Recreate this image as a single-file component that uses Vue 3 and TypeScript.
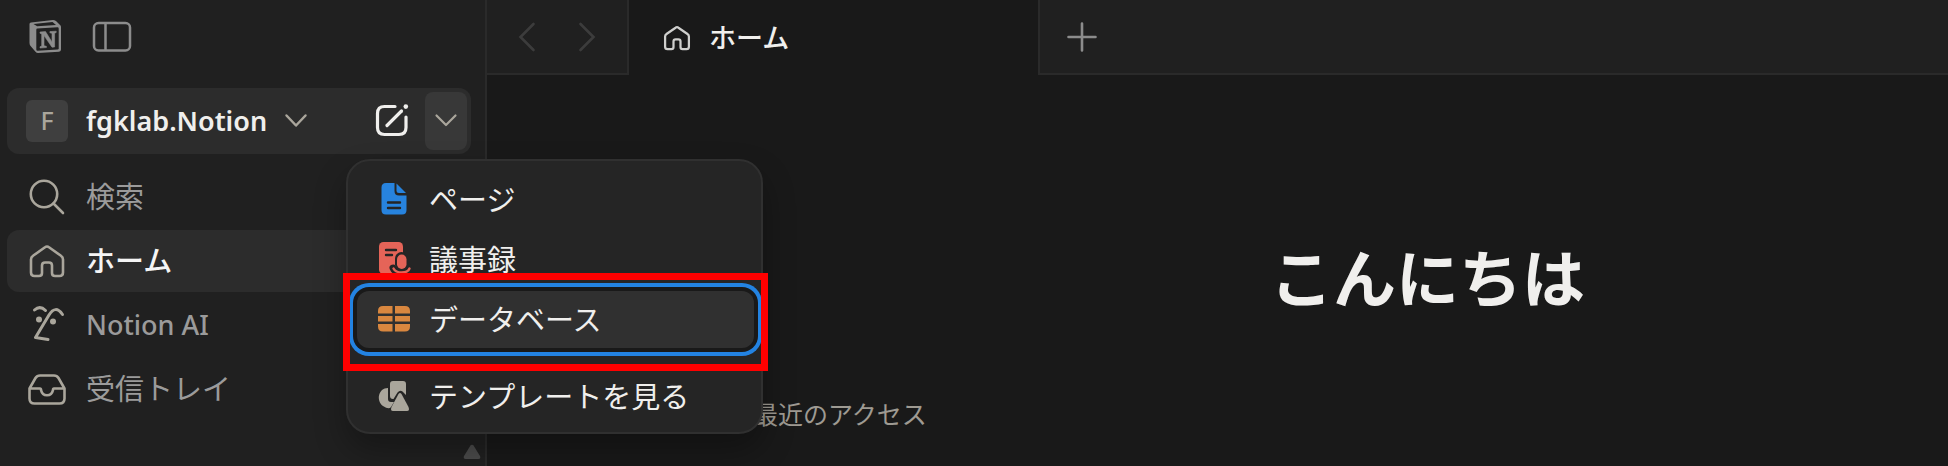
<script setup lang="ts">
interface Item { id: string; label: string }

const navItems: Item[] = [
  { id: 'search', label: '検索' },
  { id: 'home', label: 'ホーム' },
  { id: 'ai', label: 'Notion AI' },
  { id: 'inbox', label: '受信トレイ' },
]

const menuItems: Item[] = [
  { id: 'page', label: 'ページ' },
  { id: 'minutes', label: '議事録' },
  { id: 'database', label: 'データベース' },
  { id: 'template', label: 'テンプレートを見る' },
]
</script>

<template>
  <div class="app">
    <aside class="sidebar">
      <div class="window-tools">
        <button class="plain" aria-label="Notion">
          <svg width="34" height="34" viewBox="0 0 34 34">
            <path d="M2 2.500 L24 0 Q25.500 0 27 1 L31 5 Q32 5.500 32 7 V29.500 Q32 31.500 30 31.700 L9 33 Q7.500 33 6.500 31.800 L2 26.500 Q.5 25 .5 23 V4 Q.5 2.700 2 2.500Z" fill="#8c8c8c" />
            <path d="M8.300 8.500 L28.500 7.300 Q29.700 7.300 29.700 8.500 V28.300 Q29.700 29.500 28.500 29.600 L8.500 30.700 Q7.300 30.700 7.300 29.500 V9.700 Q7.300 8.600 8.300 8.500Z" fill="#202020" />
            <path d="M4.500 4 L23.500 2 L27 4.900 L8.200 6.200Z" fill="#202020" />
            <path d="M11 12 L16.500 11.600 L23 22 V13.300 L20.900 12.800 V11.600 L27.200 11.200 V12.500 L25.600 13.200 V27 L23 27.200 L15 15.600 V25.800 L17.400 26.300 V27.600 L11 28 V26.700 L12.700 26.100 V13.900 L11 13.300Z" fill="#8c8c8c" stroke="#8c8c8c" stroke-width=".6" />
          </svg>
        </button>
        <button class="plain" aria-label="サイドバー">
          <svg width="40" height="32" viewBox="0 0 40 32" fill="none" stroke="#8c8c8c" stroke-width="2.500">
            <rect x="1" y="2" width="36" height="27.500" rx="4.500" /><path d="M12.500 2V29.500" />
          </svg>
        </button>
      </div>

      <div class="workspace">
        <button class="plain workspace-name">
          <span class="badge">F</span>
          <span>fgklab.Notion</span>
          <svg width="22" height="14" viewBox="0 0 22 14" fill="none" stroke="#aaa69c" stroke-width="2.500" stroke-linecap="round" stroke-linejoin="round"><path d="M1.500 1.500 11 11.500 20.500 1.500" /></svg>
        </button>
        <button class="plain" aria-label="新規ページ">
          <svg width="34" height="34" viewBox="0 0 34 34" fill="none" stroke="#f0efed" stroke-width="3.200" stroke-linecap="round" stroke-linejoin="round">
            <path d="M20 2.500H9.500Q2.500 2.500 2.500 9.500V23.500Q2.500 30.500 9.500 30.500H24Q31 30.500 31 23.500V13" />
            <path d="M12 21.500 26.500 7" /><circle cx="30.800" cy="2.600" r="2.300" fill="#f0efed" stroke="none" />
          </svg>
        </button>
        <button class="plain drop" aria-label="新規作成メニュー">
          <svg width="22" height="14" viewBox="0 0 22 14" fill="none" stroke="#aaa69c" stroke-width="2.200" stroke-linecap="round" stroke-linejoin="round"><path d="M1.500 1.500 11 11 20.500 1.500" /></svg>
        </button>
      </div>

      <nav class="nav">
        <a v-for="item in navItems" :key="item.id" href="#" class="nav-item" :class="[item.id, { active: item.id === 'home' }]">
          <svg width="40" height="40" viewBox="0 0 40 40" fill="none" stroke="#aaa69c" stroke-width="2.600" stroke-linecap="round" stroke-linejoin="round">
            <template v-if="item.id === 'search'"><circle cx="17" cy="17" r="13.200" /><path d="M26.500 26.500 36 36" /></template>
            <path v-else-if="item.id === 'home'" d="M20 5.500Q19 5.500 18 6.300L6 14.800Q4 16 4 18.500V31.500Q4 35 7.500 35H12Q15 35 15 32V24.500Q15 21.500 18 21.500H22Q25 21.500 25 24.500V32Q25 35 28 35H32.500Q36 35 36 31.500V18.500Q36 16 34 14.800L22 6.300Q21 5.500 20 5.500Z" />
            <template v-else-if="item.id === 'ai'">
              <path d="M7.500 5Q13 0 18.500 5.500M8.500 32.500 22 10Q28.500-.500 35.500 9.500M8.500 32.500 21 34.500" stroke-width="3" />
              <circle cx="12" cy="14.500" r="3" fill="#aaa69c" stroke="none" /><circle cx="26" cy="16.500" r="3" fill="#aaa69c" stroke="none" />
            </template>
            <path v-else d="M2.500 19.500 8.500 9Q10 6.500 13 6.500H27Q30 6.500 31.500 9L37.500 19.500V29.500Q37.500 34.500 32.500 34.500H7.500Q2.500 34.500 2.500 29.500ZM3 19.500H13Q14 19.500 14 21C15.500 28 24.500 28 26 21Q26 19.500 27 19.500H37" />
          </svg>
          <span>{{ item.label }}</span>
        </a>
      </nav>
      <svg class="scroll-arrow" width="18" height="16" viewBox="0 0 18 16"><path d="M7.500 1.500Q9 0 10.500 1.500L17 12Q18 15 15.500 15H2.500Q0 15 1 12Z" fill="#4b4b4b" /></svg>
    </aside>

    <main class="main">
      <header class="tabs">
        <div class="history">
          <button class="plain" aria-label="戻る"><svg width="18" height="30" viewBox="0 0 18 30" fill="none" stroke="#3c3c3c" stroke-width="2.600" stroke-linecap="round"><path d="M15.500 2 2.500 15 15.500 28" /></svg></button>
          <button class="plain" aria-label="進む"><svg width="18" height="30" viewBox="0 0 18 30" fill="none" stroke="#3c3c3c" stroke-width="2.600" stroke-linecap="round"><path d="M2.500 2 15.500 15 2.500 28" /></svg></button>
        </div>
        <button class="plain tab">
          <svg width="28" height="28" viewBox="0 0 40 40" fill="none" stroke="#cfcfcd" stroke-width="3.200" stroke-linejoin="round"><path d="M20 4.500Q19 4.500 18 5.300L5 14.300Q3 15.500 3 18V32.500Q3 36 6.500 36H12Q15 36 15 33V25Q15 22 18 22H22Q25 22 25 25V33Q25 36 28 36H33.500Q37 36 37 32.500V18Q37 15.500 35 14.300L22 5.300Q21 4.500 20 4.500Z" /></svg>
          <span>ホーム</span>
        </button>
        <div class="rest">
          <button class="plain" aria-label="新しいタブ"><svg width="30" height="30" viewBox="0 0 30 30" stroke="#8c8c8c" stroke-width="2.600" stroke-linecap="round"><path d="M15 1.500V28.500M1.500 15H28.500" /></svg></button>
        </div>
      </header>
      <h1>こんにちは</h1>
      <h2>最近のアクセス</h2>
    </main>

    <div class="menu" role="menu">
      <button v-for="item in menuItems" :key="item.id" role="menuitem" class="plain menu-item" :class="item.id">
        <svg width="34" height="34" viewBox="0 0 34 34">
          <template v-if="item.id === 'page'">
            <path d="M9 0H17.500V8Q17.500 12.500 22 12.500H29.500V27Q29.500 31.500 25 31.500H9Q4.500 31.500 4.500 27V4.500Q4.500 0 9 0Z" fill="#2783de" /><path d="M19.500 .5 29 10H22Q19.500 10 19.500 7.500Z" fill="#2783de" />
            <path d="M11 19.500H23M11 25H23" stroke="#252525" stroke-width="2.400" stroke-linecap="round" />
          </template>
          <template v-else-if="item.id === 'minutes'">
            <rect x="2" y="-1" width="24" height="32" rx="4.500" fill="#e56458" />
            <path d="M9 7H19M9 12H15" stroke="#252525" stroke-width="2.400" stroke-linecap="round" />
            <path d="M16 25Q18 30 24.500 30Q31 30 33 25" fill="none" stroke="#252525" stroke-width="7" stroke-linecap="round" />
            <rect x="18" y="9" width="13" height="19" rx="6.500" fill="#252525" />
            <rect x="20" y="11.500" width="9.500" height="14.500" rx="4.700" fill="#e56458" />
            <path d="M16.500 25.500Q18.500 29.500 24.700 29.500Q31 29.500 32.500 25.500M24.700 29.500V33" fill="none" stroke="#e56458" stroke-width="2.400" stroke-linecap="round" />
          </template>
          <path v-else-if="item.id === 'database'" d="M6 4H15.500V11.500H1V9Q1 4 6 4ZM18 4H28Q33 4 33 9V11.500H18ZM1 14H15.500V19.500H1ZM18 14H33V19.500H18ZM1 22H15.500V29.500H6Q1 29.500 1 24.500ZM18 22H33V24.500Q33 29.500 28 29.500H18Z" fill="#d9873f" transform="translate(0 -1)" />
          <template v-else>
            <path d="M11 8V19Q11 22 14 22H17L14 27Q12 30 6 26C-1 21 1 8 11 8Z" fill="#aaa69c" />
            <path d="M16 1H26Q29 1 29 4V15L25.500 11.500Q23 9.500 20.500 12.500L16.500 19H16Q13 19 13 16V4Q13 1 16 1Z" fill="#aaa69c" />
            <path d="M21.500 14Q23 12 24.500 14L31.500 27Q33 31 30 31H16Q13 31 14.500 27Z" fill="#aaa69c" />
          </template>
        </svg>
        <span>{{ item.label }}</span>
      </button>
    </div>
    <div class="highlight"></div>
  </div>
</template>

<style>
body { background: #191919; overflow: hidden; }
</style>

<style scoped>
* { box-sizing: border-box; }
.app { position: relative; display: flex; height: 100vh; overflow: hidden; background: #191919; color: #f0efed; font-family: "Noto Sans", "Noto Sans CJK JP", sans-serif; font-size: 29px; line-height: 40px; }
.plain { display: flex; align-items: center; padding: 0; border: 0; background: none; color: inherit; font: inherit; text-align: left; }
svg { flex: none; display: block; overflow: visible; }
.sidebar { position: relative; flex: none; width: 487px; padding: 0 14px 0 7px; background: #202020; border-right: 2px solid #2a2a2a; }
.window-tools { display: flex; align-items: center; gap: 30px; height: 74px; padding-left: 22px; margin-bottom: 14px; }
.workspace { display: flex; align-items: center; height: 66px; padding-right: 4px; border-radius: 12px; background: #2c2c2c; }
.workspace-name { flex: 1; gap: 18px; padding-left: 19px; font-size: 27px; font-weight: 600; }
.badge { width: 42px; height: 42px; border-radius: 6px; background: #3f3f3f; color: #aaa69c; font-size: 25px; font-weight: 500; text-align: center; }
.drop { justify-content: center; width: 42px; height: 58px; margin-left: 16px; border-radius: 8px; background: #383838; }
.nav { display: grid; gap: 2px; margin-top: 12px; }
.nav-item { display: flex; align-items: center; gap: 19px; height: 62px; padding-left: 20px; border-radius: 12px; color: #9b9b9b; text-decoration: none; }
.nav-item.active { background: #2c2c2c; color: #f5f5f5; font-weight: 500; }
.nav-item.ai { font-size: 27px; font-weight: 500; }
.scroll-arrow { position: absolute; right: 4px; bottom: 6px; }
.main { flex: 1; min-width: 0; }
.tabs { display: flex; height: 75px; font-size: 27px; }
.history { display: flex; align-items: center; gap: 42px; width: 142px; padding-left: 31px; background: #202020; border: solid #2a2a2a; border-width: 0 2px 2px 0; }
.tab { gap: 18px; width: 409px; padding-left: 34px; font-weight: 500; }
.rest { flex: 1; display: flex; align-items: center; padding-left: 27px; background: #202020; border: solid #2a2a2a; border-width: 0 0 2px 2px; }
h1 { margin: 159px 0 0; padding-left: 420px; font-size: 63px; line-height: 88px; font-weight: 700; text-align: center; white-space: nowrap; }
h2 { margin: 72px 0 0; padding-left: 266px; color: #9e9a92; font-size: 25px; line-height: 40px; font-weight: 400; }
.menu { position: absolute; left: 346px; top: 159px; width: 417px; padding: 10px 7px 7px 9px; border: 2px solid #303030; border-radius: 24px; background: #252525; box-shadow: 0 16px 32px rgba(0, 0, 0, .3); }
.menu-item { width: 100%; height: 57px; margin-bottom: 3px; padding-left: 20px; gap: 18px; border-radius: 12px; }
.menu-item.database { background: #303030; box-shadow: 0 0 0 4px #191919, 0 0 0 8px #2383e2; }
.menu-item.template { margin: 20px 0 0; }
.highlight { position: absolute; left: 343px; top: 273px; width: 425px; height: 98px; border: 7px solid #f00; pointer-events: none; }
</style>
